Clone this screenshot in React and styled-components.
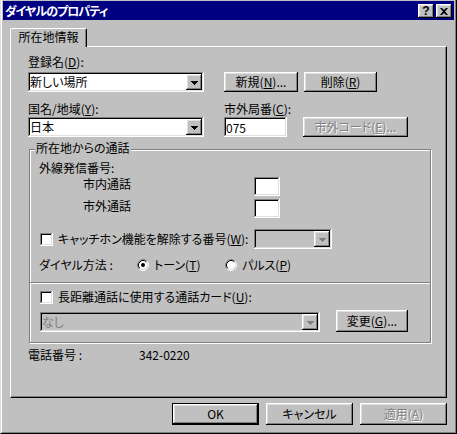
import React from 'react';
import styled, { createGlobalStyle, css } from 'styled-components';

const GlobalStyle = createGlobalStyle`
  html, body {
    margin: 0;
    padding: 0;
    background: #c0c0c0;
  }
  body {
    font-family: "Noto Sans CJK JP", "Noto Sans", sans-serif;
    font-size: 12px;
    line-height: 14px;
    color: #000;
    font-feature-settings: "palt";
  }
  * {
    box-sizing: border-box;
  }
  u {
    text-underline-offset: 1px;
  }
`;

const raised = css`
  box-shadow: inset -1px -1px #000, inset 1px 1px #fff, inset -2px -2px #808080, inset 2px 2px #dfdfdf;
`;
const sunken = css`
  box-shadow: inset -1px -1px #fff, inset 1px 1px #808080, inset -2px -2px #dfdfdf, inset 2px 2px #000;
`;

const Window = styled.div`
  width: 457px;
  height: 434px;
  background: #c0c0c0;
  border-left: 1px solid #dfdfdf;
  border-right: 1px solid #000;
  border-bottom: 1px solid #000;
`;

const Frame = styled.div`
  height: 100%;
  border-left: 1px solid #fff;
  border-right: 1px solid #808080;
  border-bottom: 1px solid #808080;
  padding: 1px 1px 0;
  display: flex;
  flex-direction: column;
`;

const TitleBar = styled.div`
  height: 19px;
  background: #000080;
  display: flex;
  align-items: center;
  padding: 1px 2px 0 2px;
`;

const Title = styled.span`
  flex: 1;
  color: #fff;
  font-weight: bold;
  letter-spacing: -1px;
  white-space: nowrap;
`;

const TitleButton = styled.div`
  width: 16px;
  height: 14px;
  background: #c0c0c0;
  ${raised}
  display: flex;
  align-items: center;
  justify-content: center;
  margin-left: ${p => p.$gap || 0}px;
  font-family: "Liberation Sans", sans-serif;
  font-weight: bold;
  font-size: 12px;
  line-height: 12px;
`;

const Body = styled.div`
  padding: 8px 7px 0;
  display: flex;
  flex-direction: column;
`;

const TabStrip = styled.div`
  display: flex;
`;

const Tab = styled.div`
  width: 77px;
  height: 19px;
  margin-bottom: -1px;
  position: relative;
  z-index: 1;
  background: #c0c0c0;
  border: 1px solid #fff;
  border-bottom: none;
  border-right-color: #000;
  border-radius: 2px 2px 0 0;
  box-shadow: inset -1px 0 #808080;
  text-align: center;
  padding-top: 1px;
`;

const Panel = styled.div`
  height: 352px;
  border-top: 1px solid #fff;
  border-left: 1px solid #fff;
  border-right: 1px solid #000;
  border-bottom: 1px solid #000;
  box-shadow: inset -1px -1px #808080;
  padding: 8px 0 0 17px;
  display: flex;
  flex-direction: column;
`;

const Label = styled.div`
  height: 14px;
  white-space: nowrap;
  width: ${p => (p.$w ? `${p.$w}px` : 'auto')};
  flex-shrink: 0;
  color: ${p => (p.$disabled ? '#808080' : '#000')};
`;

const Row = styled.div`
  display: flex;
  align-items: ${p => p.$align || 'center'};
  margin-top: ${p => p.$mt || 0}px;
  padding-left: ${p => p.$pl || 0}px;
  min-height: 14px;
`;

const Combo = styled.div`
  width: ${p => p.$w}px;
  height: 20px;
  flex-shrink: 0;
  background: ${p => (p.$disabled ? '#c0c0c0' : '#fff')};
  ${sunken}
  display: flex;
  align-items: center;
  padding: 2px;
`;

const ComboText = styled.span`
  flex: 1;
  white-space: nowrap;
  color: ${p => (p.$disabled ? '#808080' : '#000')};
`;

const DropButton = styled.div`
  width: 16px;
  height: 16px;
  background: #c0c0c0;
  ${raised}
  display: flex;
  align-items: center;
  justify-content: center;
  padding-top: 1px;
`;

const Button = styled.div`
  width: ${p => p.$w}px;
  height: ${p => p.$h || 20}px;
  margin-left: ${p => p.$ml || 0}px;
  flex-shrink: 0;
  background: #c0c0c0;
  ${p =>
    p.$default
      ? css`
          box-shadow: inset 0 0 0 1px #000, inset -2px -2px #000, inset 2px 2px #fff,
            inset -3px -3px #808080, inset 3px 3px #dfdfdf;
        `
      : raised}
  display: flex;
  align-items: center;
  justify-content: center;
  white-space: nowrap;
  color: ${p => (p.$disabled ? '#808080' : '#000')};
  text-shadow: ${p => (p.$disabled ? '1px 1px 0 #fff' : 'none')};
`;

const TextBox = styled.div`
  width: ${p => p.$w}px;
  height: ${p => p.$h || 20}px;
  margin-left: ${p => p.$ml || 0}px;
  flex-shrink: 0;
  background: #fff;
  ${sunken}
  padding: 2px 2px 0;
  display: flex;
  align-items: center;
`;

const Check = styled.div`
  width: 13px;
  height: 13px;
  flex-shrink: 0;
  background: #fff;
  ${sunken}
  margin-right: 5px;
`;

const Group = styled.div`
  margin: 12px 0 0 1px;
  width: 402px;
  height: 194px;
  border: 1px solid #808080;
  box-shadow: inset 1px 1px #fff, 1px 1px #fff;
  display: flex;
  flex-direction: column;
`;

const Legend = styled.span`
  align-self: flex-start;
  height: 14px;
  margin: -9px 0 0 5px;
  padding: 0 1px;
  background: #c0c0c0;
`;

const Separator = styled.div`
  margin-top: ${p => p.$mt || 0}px;
  height: 2px;
  border-top: 1px solid #808080;
  border-bottom: 1px solid #fff;
`;

const RadioOption = styled.div`
  display: flex;
  align-items: center;
  width: ${p => (p.$w ? `${p.$w}px` : 'auto')};
  gap: 5px;
  white-space: nowrap;
`;

const Footer = styled.div`
  display: flex;
  justify-content: flex-end;
  gap: 7px;
  margin-top: 5px;
`;

function Arrow({ disabled }) {
  return (
    <svg width="7" height="4" viewBox="0 0 7 4">
      <path d="M0 0h7v1H0zM1 1h5v1H1zM2 2h3v1H2zM3 3h1v1H3z" fill={disabled ? '#808080' : '#000'} />
    </svg>
  );
}

function ComboBox({ w, disabled, children }) {
  return (
    <Combo $w={w} $disabled={disabled}>
      <ComboText $disabled={disabled}>{children}</ComboText>
      <DropButton>
        <Arrow disabled={disabled} />
      </DropButton>
    </Combo>
  );
}

function Radio({ checked }) {
  return (
    <svg width="12" height="12" viewBox="0 0 12 12">
      <circle cx="6" cy="6" r="4.5" fill="#fff" />
      <path d="M2.11 9.89A5.5 5.5 0 0 1 9.89 2.11" stroke="#808080" fill="none" />
      <path d="M9.89 2.11A5.5 5.5 0 0 1 2.11 9.89" stroke="#fff" fill="none" />
      <path d="M2.82 9.18A4.5 4.5 0 0 1 9.18 2.82" stroke="#000" fill="none" />
      <path d="M9.18 2.82A4.5 4.5 0 0 1 2.82 9.18" stroke="#dfdfdf" fill="none" />
      {checked && <circle cx="6" cy="6" r="2" fill="#000" />}
    </svg>
  );
}

function CloseGlyph() {
  return (
    <svg width="8" height="7" viewBox="0 0 8 7">
      <path d="M0 0h2l2 2 2-2h2L5 3.5 8 7H6L4 5 2 7H0l3-3.5z" fill="#000" />
    </svg>
  );
}

export default function App() {
  return (
    <>
      <GlobalStyle />
      <Window>
        <Frame>
          <TitleBar>
            <Title>ダイヤルのプロパティ</Title>
            <TitleButton>?</TitleButton>
            <TitleButton $gap={2}>
              <CloseGlyph />
            </TitleButton>
          </TitleBar>
          <Body>
            <TabStrip>
              <Tab>所在地情報</Tab>
            </TabStrip>
            <Panel>
              <Label>
                登録名(<u>D</u>):
              </Label>
              <Row $mt={3}>
                <ComboBox w={176}>新しい場所</ComboBox>
                <Button $w={74} $ml={20}>
                  新規(<u>N</u>)...
                </Button>
                <Button $w={73} $ml={6}>
                  削除(<u>R</u>)
                </Button>
              </Row>
              <Row $mt={10}>
                <Label $w={196}>
                  国名/地域(<u>Y</u>):
                </Label>
                <Label>
                  市外局番(<u>C</u>):
                </Label>
              </Row>
              <Row $mt={1}>
                <ComboBox w={176}>日本</ComboBox>
                <TextBox $w={63} $ml={20}>075</TextBox>
                <Button $w={105} $ml={16} $disabled>
                  市外コード(<u>E</u>)...
                </Button>
              </Row>

              <Group>
                <Legend>所在地からの通話</Legend>
                <Row $mt={6} $pl={9}>
                  <Label>外線発信番号:</Label>
                </Row>
                <Row $mt={2} $pl={53} $align="flex-start">
                  <Label $w={171}>市内通話</Label>
                  <TextBox $w={26} $h={19} />
                </Row>
                <Row $mt={3} $pl={53} $align="flex-start">
                  <Label $w={171}>市外通話</Label>
                  <TextBox $w={26} $h={19} />
                </Row>
                <Row $mt={11} $pl={10}>
                  <Check />
                  <Label $w={196}>
                    キャッチホン機能を解除する番号(<u>W</u>):
                  </Label>
                  <ComboBox w={78} disabled />
                </Row>
                <Row $mt={9} $pl={9}>
                  <Label $w={98}>ダイヤル方法 :</Label>
                  <RadioOption $w={88}>
                    <Radio checked />
                    <span>
                      トーン(<u>T</u>)
                    </span>
                  </RadioOption>
                  <RadioOption>
                    <Radio />
                    <span>
                      パルス(<u>P</u>)
                    </span>
                  </RadioOption>
                </Row>
                <Separator $mt={10} />
                <Row $mt={6} $pl={10}>
                  <Check />
                  <Label>
                    長距離通話に使用する通話カード(<u>U</u>):
                  </Label>
                </Row>
                <Row $mt={6} $pl={10} $align="flex-end">
                  <ComboBox w={280} disabled>
                    なし
                  </ComboBox>
                  <Button $w={72} $h={22} $ml={16}>
                    変更(<u>G</u>)...
                  </Button>
                </Row>
              </Group>

              <Row $mt={5}>
                <Label $w={111}>電話番号 :</Label>
                <Label>342-0220</Label>
              </Row>
            </Panel>
            <Footer>
              <Button $w={87} $h={22} $default>
                OK
              </Button>
              <Button $w={87} $h={22}>
                キャンセル
              </Button>
              <Button $w={87} $h={22} $disabled>
                適用(<u>A</u>)
              </Button>
            </Footer>
          </Body>
        </Frame>
      </Window>
    </>
  );
}
